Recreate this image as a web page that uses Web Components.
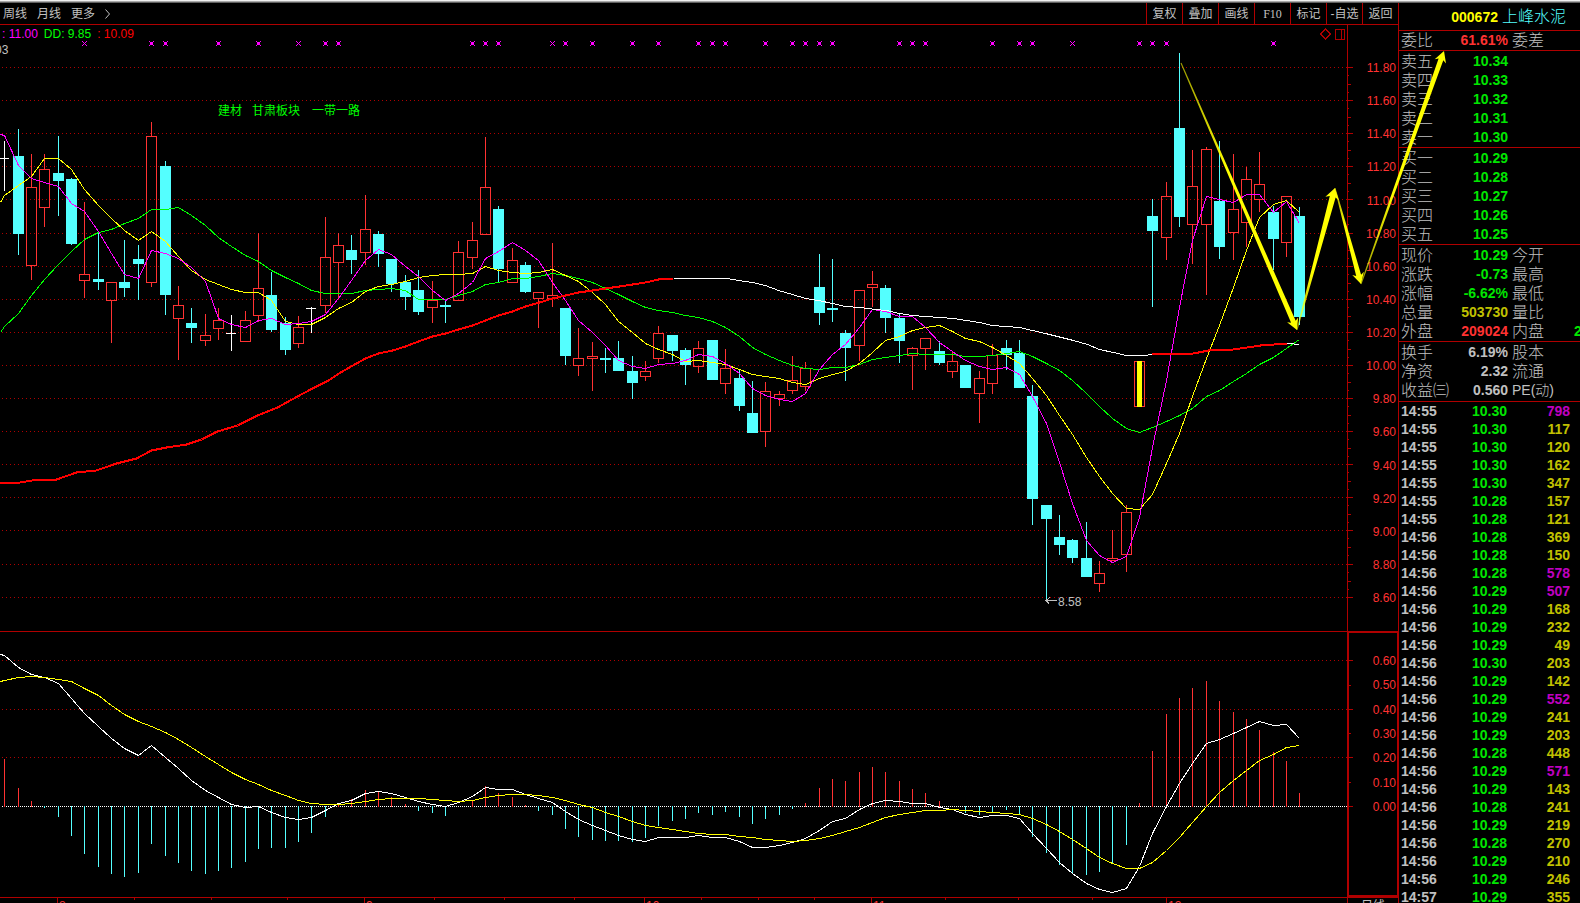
<!DOCTYPE html>
<html lang="zh-CN">
<head>
<meta charset="utf-8">
<title>000672 上峰水泥</title>
<style>
html, body { margin: 0; height: 100%; background: #000; }
body { overflow: hidden; color: #c0c0c0; font: 12px/16px "Liberation Sans", "Noto Sans CJK SC", sans-serif;
  --line: #b00000; --red: #ff3232; --green: #00e600; --cyan: #54ffff; --yellow: #ffff00; --grey: #c0c0c0; }
</style>
</head>
<body>
<stock-app></stock-app>
<script>
const NS = 'font: 12px/16px "Liberation Sans", "Noto Sans CJK SC", sans-serif;';
class Base extends HTMLElement {
  constructor() {
    super();
    this.attachShadow({ mode: 'open' });
  }
  connectedCallback() { this.shadowRoot.innerHTML = this.render(); }
}

/* ---------- data: [kind, high, low, top, bottom], one entry per trading day ---------- */
const DAYS = `W141,191,158,158 C129,255,156,234 R154,280,187,266 R154,227,169,208 C136,216,173,181 C178,245,179,244
R202,298,274,281 C232,290,279,282 R282,343,282,301 C240,297,282,288 C245,300,259,264 R122,287,136,283 C161,315,166,295
R286,360,305,319 C308,343,323,328 R314,346,335,341 R308,340,320,329 W315,351,333,333 R311,342,320,342 R233,322,288,316
C272,332,295,330 C317,355,323,350 R316,348,327,344 W307,333,308,308 R217,313,257,306 R233,298,245,263 C235,274,250,260
R195,265,229,253 C231,267,234,254 C259,292,259,284 C275,310,282,297 C270,315,290,312 R281,323,300,308 C300,323,305,307
R241,301,252,301 R222,269,240,258 R137,235,187,235 C206,282,209,269 R248,283,260,283 C262,293,265,292 R292,328,292,299
R243,307,295,299 C308,365,308,356 R328,376,358,366 R342,391,356,359 C348,373,358,360 C341,371,358,371 C356,399,371,383
R361,381,371,377 R326,363,333,359 C335,361,335,351 C348,385,350,365 R341,373,348,367 C340,380,340,380 R349,394,368,384
C369,411,378,406 C381,433,413,433 R382,447,391,432 R391,406,394,399 R356,394,380,391 R362,391,368,387 C254,325,287,313
C259,322,308,310 C330,381,333,348 R290,361,290,346 R271,307,284,288 C285,333,288,318 C314,363,318,341 R347,390,348,356
R338,370,338,349 C341,365,351,363 R352,378,361,372 C365,388,365,388 R371,423,378,394 R344,394,355,384 C340,370,348,355
C340,388,353,388 C385,525,396,499 C505,599,505,519 C515,555,537,545 C539,563,540,558 C522,577,558,577 R561,592,573,584
R530,561,558,561 R505,572,512,555 Y361,407,361,407 C199,307,216,231 R182,260,196,238 C53,227,128,217 R150,264,186,225
R147,295,149,225 C141,259,201,247 R154,260,209,233 R167,247,179,223 R152,212,184,200 C206,270,212,239 R196,257,196,243
C207,325,216,317`.split(/\s+/).map(s => [s[0], ...s.slice(1).split(',').map(Number)]);

const MA5 = [134,135,165,178,182,186,203,211,231,253,274,278,250,253,258,267,281,318,324,327,320,318,324,323,321,314,298,280,260,249,254,266,276,290,300,293,282,258,251,242,250,260,282,300,320,332,345,360,366,368,364,363,360,354,356,363,373,388,395,399,401,393,369,354,344,327,309,311,316,316,327,342,351,360,366,369,367,374,396,423,462,503,540,555,562,556,517,447,380,307,240,196,199,202,194,194,212,201,223];
const MA10 = [202,195,185,176,158,158,169,189,205,218,230,240,231,241,256,270,279,284,289,292,292,300,321,324,324,317,308,302,291,286,284,281,277,275,274,274,273,266,270,272,273,272,269,275,281,292,304,321,332,343,349,354,361,360,362,364,369,374,376,378,382,384,378,374,371,363,352,340,336,330,327,325,331,338,341,347,355,363,378,395,415,434,457,476,493,508,509,494,463,433,396,358,325,287,250,217,204,200,212];
const MA20 = [332,326,313,295,279,264,251,239,232,229,223,218,209,209,207,215,225,237,246,255,261,270,277,283,290,293,293,293,290,289,288,290,299,299,299,295,291,284,282,278,278,276,273,275,278,282,288,294,301,307,310,312,315,317,321,327,336,347,354,360,365,368,369,367,367,364,359,357,355,353,354,354,354,356,356,355,353,351,356,363,370,380,393,406,418,428,432,427,421,415,408,396,390,381,373,364,357,348,339];
const RISE_1 = [[0,483],[20,482],[37,479],[56,479],[76,472],[96,470],[116,463],[136,458],[151,450],[166,447],[186,444],[201,439],[217,431],[237,425],[257,415],[277,407],[297,396],[312,388],[328,380],[340,372],[365,358],[378,353],[392,350],[405,346],[418,341],[432,336],[445,333],[458,329],[472,325],[485,320],[498,315],[512,311],[525,306],[539,302],[552,298],[565,295],[578,292],[592,290],[605,288],[619,286],[632,284],[645,282],[658,279],[673,278]];
const FALL = [[673,278],[727,278],[738,280],[752,282],[765,285],[778,290],[792,294],[805,298],[818,300],[832,303],[845,306],[859,307],[875,309],[886,310],[899,313],[912,315],[939,317],[953,318],[979,322],[992,325],[1019,327],[1045,333],[1073,340],[1087,344],[1099,349],[1113,352],[1126,355],[1143,355],[1152,354]];
const RISE_2 = [[1152,354],[1193,353],[1208,350],[1233,349],[1260,345],[1287,343]];
const HIST = [759,788,801,808,817,836,854,867,874,877,873,844,856,863,871,874,871,868,862,849,848,848,842,833,817,804,799,790,791,797,804,811,813,816,806,800,786,793,797,805,811,815,829,837,840,841,841,842,838,826,821,819,813,815,812,817,824,819,815,809,803,788,779,781,772,767,772,781,789,793,801,806,813,815,812,810,814,837,853,865,873,875,872,864,845,803,751,714,698,688,681,701,712,719,730,752,761,793];
const DIF = [654,655,667,674,677,683,698,713,726,738,748,755,745,757,768,780,790,797,804,807,806,812,817,819,817,810,803,800,793,791,793,797,801,804,806,802,796,787,789,789,794,798,802,811,819,825,830,835,839,841,837,837,837,835,837,837,841,847,847,845,842,838,830,821,818,809,803,800,801,803,803,807,809,814,817,815,815,818,833,848,862,873,883,889,892,888,866,833,806,783,763,743,739,733,727,721,725,724,738];
const DEA = [681,680,677,676,677,679,681,688,695,705,714,721,726,732,739,747,756,764,772,779,784,790,795,800,803,804,804,803,801,799,798,798,798,799,800,801,800,797,795,794,794,795,797,800,804,807,812,816,821,825,827,829,831,833,834,834,836,837,839,840,841,840,838,835,831,827,822,817,814,812,810,810,809,810,811,812,813,814,818,824,831,839,848,857,863,868,868,862,850,837,822,806,792,780,770,760,754,747,745];
const SIGNALS = [6,11,12,16,19,22,24,25,35,36,37,41,42,44,47,49,52,53,54,57,59,60,61,62,67,68,69,74,76,77,80,85,86,87,95];
const FAINT = [6, 22, 41, 80];

const dayX = i => Math.round(4.3 + i * 13.35);
/* the first value of a daily series is its level at the left edge */
const daily = a => a.map((y, k) => [k ? dayX(k - 1) : 0, y]);
const curve = (pts, color, w = 1) =>
  `<polyline fill="none" stroke="${color}" stroke-width="${w}" points="${pts.map(([x, y]) => (x + .5) + ',' + (y + .5)).join(' ')}"/>`;
const rect = (x, y, w, h, f) => `<rect x="${x}" y="${y}" width="${w}" height="${h}" fill="${f}"/>`;
const dots = (y, step, color) => `<line x1="2" x2="100%" y1="${y}.5" y2="${y}.5" stroke="${color}" stroke-dasharray="1 ${step - 1}"/>`;
const GRID = Array.from({ length: 17 }, (_, k) => Math.round(67 + k * 33.1));

/* plot canvas: newest day stays on the right edge, older days run out on the left */
const canvas = (top, width, back, front) => `
  <svg width="100%" height="100%" shape-rendering="crispEdges">
    <g transform="translate(0,${-top})">${back}</g>
    <svg x="100%" overflow="visible"><g transform="translate(${-width},${-top})">${front}</g></svg>
  </svg>`;

class PriceChart extends Base {
  candle([k, hi, lo, a, b], i) {
    const x = dayX(i);
    if (k === 'W') return rect(x, hi, 1, lo - hi, '#fff') + rect(x - 5, a, 10, 1, '#fff');
    if (k === 'C') return rect(x, hi, 1, lo - hi, '#54ffff') + rect(x - 5, a, 11, b - a, '#54ffff');
    return rect(x, hi, 1, a - hi, '#ff3232') + rect(x, b, 1, lo - b, '#ff3232')
      + `<rect x="${x - 4.5}" y="${a + .5}" width="10" height="${b - a - 1}" fill="none" stroke="#ff3232"/>`
      + (k === 'Y' ? rect(x - 2, a, 5, b - a, '#ff0') : '');
  }
  signal(i) {
    const x = dayX(i);
    return `<path d="M${x - 2} 41l5 5M${x + 3} 41l-5 5" stroke="#f0f" fill="none"/>`
      + (FAINT.includes(i) ? '' : rect(x - 1, 42, 3, 3, '#f0f'));
  }
  render() {
    return `<style>
      :host { display: block; position: relative; overflow: hidden; min-width: 0; }
      svg { display: block; }
      text { ${NS} }
      .plot { position: absolute; inset: 0; }
      .legend { position: relative; display: flex; gap: 6px; padding: 1px 0 0 2px; }
      .count { position: relative; margin-left: -5px; }
      .a { color: #f0f; } .b { color: #0f0; } .c { color: #f00; }
    </style>
    <div class="plot">${canvas(25, 1347,
      GRID.map(y => dots(y, 4, '#b00000')).join(''),
      SIGNALS.map(i => this.signal(i)).join('') + DAYS.map((d, i) => this.candle(d, i)).join('')
      + curve(daily(MA20), '#0f0') + curve(daily(MA10), '#ff0') + curve(daily(MA5), '#f0f')
      + curve(FALL, '#fff') + curve([[1287,343],[1299,344]], '#fff')
      + curve(RISE_1, '#f00', 2) + curve(RISE_2, '#f00', 2)
      + `<path d="M1325.5 29l5 5-5 5-5-5zM1335.5 29.5h9v10h-9zM1341.5 29v10" fill="none" stroke="#b00000"/>
         <path d="M1057 600.5h-11m4-3l-4 3 3 3" fill="none" stroke="#c0c0c0"/>
         <text x="1058" y="606" fill="#c0c0c0">8.58</text>
         <g fill="#0f0"><text x="218" y="115">建材</text><text x="252" y="115">甘肃板块</text><text x="312" y="115">一带一路</text></g>`)}</div>
    <div class="legend"><span class="a">: 11.00</span><span class="b">DD: 9.85</span><span class="c">: 10.09</span></div>
    <div class="count">03</div>`;
  }
}

class MacdChart extends Base {
  render() {
    const bars = HIST.map((y, i) => y < 806 ? rect(dayX(i), y, 1, 807 - y, '#ff3232') : rect(dayX(i), 806, 1, y - 806, '#54ffff')).join('');
    return `<style>:host { display: block; overflow: hidden; min-width: 0; } svg { display: block; }</style>
    ${canvas(632, 1347, [660, 709, 757].map(y => dots(y, 4, '#b00000')).join('') + dots(806, 2, '#fff'),
      bars + curve(daily(DIF), '#fff') + curve(daily(DEA), '#ff0'))}`;
  }
}

class MonthAxis extends Base {
  render() {
    const small = [134, 211, 287, 434, 504, 574, 701, 758, 814, 945, 1018, 1092];
    const big = [[57, '8'], [364, '9'], [644, '10'], [871, '11'], [1166, '12']];
    return `<style>:host { display: block; overflow: hidden; min-width: 0; } svg { display: block; } text { ${NS} fill: #ff3232; }</style>
    ${canvas(898, 1347, '', small.map(x => rect(x, 898, 1, 2, '#b00000')).join('')
      + big.map(([x, t]) => rect(x, 898, 1, 5, '#b00000') + `<text x="${x + 2}" y="910">${t}</text>`).join(''))}`;
  }
}

/* scale with evenly spread labels; its tick marks are given as "y:length" pairs */
class ValueAxis extends Base {
  render() {
    const labels = this.getAttribute('labels').split(' ');
    const ticks = this.getAttribute('ticks').split(' ').map(t => t.split(':').map(Number));
    return `<style>
      :host { display: grid; box-sizing: border-box; overflow: hidden; }
      svg, ol { grid-area: 1 / 1; }
      ol { list-style: none; margin: 0; padding: 0 var(--end) 0 0; height: var(--span); margin-top: var(--top);
        display: flex; flex-direction: column; justify-content: space-between; text-align: right; color: var(--red); }
    </style>
    <svg width="100%" height="100%" shape-rendering="crispEdges">${ticks.map(([y, l]) => rect(0, y, l, 1, '#b00000')).join('')}</svg>
    <ol>${labels.map(l => `<li>${l}</li>`).join('')}</ol>`;
  }
}

class TopBar extends Base {
  render() {
    return `<style>
      :host { display: flex; justify-content: space-between; border-bottom: 1px solid var(--line); }
      nav { display: flex; align-items: center; }
      .periods { gap: 10px; padding-left: 3px; }
      button { font: inherit; color: inherit; background: none; border: 0; padding: 0; margin: 0; white-space: nowrap; }
      .tools { align-items: stretch; }
      .tools button { width: 36px; border-left: 1px solid var(--line); text-align: center; }
      .tools .latin { font-family: "Liberation Serif", serif; }
      svg { display: block; }
    </style>
    <nav class="periods"><button>周线</button><button>月线</button><button>更多</button>
      <button aria-label="展开"><svg width="5" height="10" fill="none" stroke="#c0c0c0"><path d="M.5.5l4 4.500-4 4.500"/></svg></button></nav>
    <nav class="tools"><button>复权</button><button>叠加</button><button>画线</button><button class="latin">F10</button><button>标记</button><button>-自选</button><button>返回</button></nav>`;
  }
}

class QuoteTable extends Base {
  render() {
    const rows = this.getAttribute('rows').split(';').map(r => r.split(','));
    return `<style>
      :host { display: block; border-bottom: 1px solid var(--line); padding: var(--pad, 1px 0 0); }
      table { border-collapse: collapse; table-layout: fixed; width: 100%; }
      td, th { padding: 0; height: 19px; line-height: 19px; white-space: nowrap; overflow: hidden; text-align: left; }
      th { font-size: 16px; font-weight: 300; padding-left: 2px; }
      th.mix { font-size: 14px; }
      td { font-size: 14px; font-weight: bold; text-align: right; padding-right: 2px; }
      td:last-child { text-align: left; padding: 0; color: var(--green); }
      .g { color: var(--green); } .r { color: var(--red); } .y { color: #c0c000; }
    </style>
    <table><colgroup><col style="width:50px"><col style="width:61px"><col style="width:64px"><col></colgroup>
    ${rows.map(([n, v, c, n2 = '', v2 = '']) => `<tr><th scope="row">${n}</th><td class="${c}">${v}</td><th scope="row" class="${/PE/.test(n2) ? 'mix' : ''}">${n2}</th><td>${v2}</td></tr>`).join('')}
    </table>`;
  }
}

const TICKS = `14:55 10.30 798,14:55 10.30 117,14:55 10.30 120,14:55 10.30 162,14:55 10.30 347,14:55 10.28 157,14:55 10.28 121,14:56 10.28 369,14:56 10.28 150,14:56 10.28 578,14:56 10.29 507,14:56 10.29 168,14:56 10.29 232,14:56 10.29 49,14:56 10.30 203,14:56 10.29 142,14:56 10.29 552,14:56 10.29 241,14:56 10.29 203,14:56 10.28 448,14:56 10.29 571,14:56 10.29 143,14:56 10.28 241,14:56 10.29 219,14:56 10.28 270,14:56 10.29 210,14:56 10.29 246,14:57 10.29 355`;
class TickTable extends Base {
  render() {
    return `<style>
      :host { display: block; }
      table { border-collapse: collapse; table-layout: fixed; width: 100%; font-size: 14px; font-weight: bold; }
      td { padding: 0; height: 18px; line-height: 18px; text-align: right; color: #c0c000; }
      td:first-child { text-align: left; padding-left: 2px; color: var(--grey); }
      td:nth-child(2) { color: var(--green); }
      td:last-child { padding-right: 10px; }
      td.big { color: #c000c0; }
    </style>
    <table><colgroup><col style="width:50px"><col style="width:58px"><col></colgroup>
    ${TICKS.split(',').map(t => t.split(' ')).map(([a, b, c]) => `<tr><td>${a}</td><td>${b}</td><td class="${c > 500 ? 'big' : ''}">${c}</td></tr>`).join('')}
    </table>`;
  }
}

class QuotePanel extends Base {
  render() {
    return `<style>
      :host { display: block; overflow: hidden; border-left: 1px solid var(--line); }
      header { display: flex; align-items: center; justify-content: flex-end; gap: 4px; height: 28px; box-sizing: border-box;
        padding-right: 14px; border-bottom: 1px solid var(--line); }
      h1 { margin: 0; font-size: 16px; font-weight: 300; color: var(--cyan); }
      b { font-size: 14px; color: var(--yellow); }
      .one { --pad: 0; } .three { --pad: 1px 0; }
    </style>
    <header><b>000672</b><h1>上峰水泥</h1></header>
    <quote-table class="one" rows="委比,61.61%,r,委差"></quote-table>
    <quote-table rows="卖五,10.34,g;卖四,10.33,g;卖三,10.32,g;卖二,10.31,g;卖一,10.30,g"></quote-table>
    <quote-table rows="买一,10.29,g;买二,10.28,g;买三,10.27,g;买四,10.26,g;买五,10.25,g"></quote-table>
    <quote-table rows="现价,10.29,g,今开;涨跌,-0.73,g,最高;涨幅,-6.62%,g,最低;总量,503730,y,量比;外盘,209024,r,内盘,2"></quote-table>
    <quote-table class="three" rows="换手,6.19%,,股本;净资,2.32,,流通;收益㈢,0.560,,PE(动)"></quote-table>
    <tick-table></tick-table>`;
  }
}

/* hand-drawn forecast: tapering arrows laid over the chart and the quotes */
class TrendArrows extends Base {
  arrow([x1, y1, x2, y2, w, hw], i) {
    const L = Math.hypot(x2 - x1, y2 - y1), ux = (x2 - x1) / L, uy = (y2 - y1) / L;
    const p = (d, s) => (x1 + ux * d - uy * s).toFixed(1) + ',' + (y1 + uy * d + ux * s).toFixed(1);
    return `<linearGradient id="g${i}" gradientUnits="userSpaceOnUse" x1="${x1}" y1="${y1}" x2="${x2}" y2="${y2}">
        <stop offset="0" stop-color="#ff0" stop-opacity=".6"/><stop offset=".4" stop-color="#ff0"/></linearGradient>
      <polygon fill="url(#g${i})" points="${[p(0, -.5), p(L - 9, -w), p(L - 11, -hw), p(L, 0), p(L - 11, hw), p(L - 9, w), p(0, .5)].join(' ')}"/>`;
  }
  render() {
    return `<style>:host { display: block; position: absolute; top: 0; right: 0; pointer-events: none; } svg { display: block; }</style>
    <svg width="420" height="340" viewBox="1160 0 420 340">${[
      [1181, 63, 1297, 330, 2.5, 6], [1297, 330, 1335, 188, 3, 7],
      [1335, 188, 1361, 284, 2.5, 6], [1361, 284, 1444, 51, 2.5, 6]].map(this.arrow).join('')}</svg>`;
  }
}

class StockApp extends Base {
  render() {
    const price = GRID.map(y => y - 25), sub = [];
    price.forEach((y, k) => { sub.push(y + ':5'); if (k < 16) sub.push((y + 8) + ':1', (y + 17) + ':3', (y + 25) + ':1'); });
    const prices = Array.from({ length: 17 }, (_, k) => (11.8 - k * .2).toFixed(2)).join(' ');
    return `<style>
      :host { display: grid; position: relative; height: 100vh; overflow: hidden; background: #000;
        grid-template: 3px 22px minmax(0, 1fr) 266px 6px / minmax(0, 1fr) 51px 182px; }
      .edge { grid-column: 1 / -1; background: linear-gradient(#f0f0f0 1px, #a8a8a8 1px 2px, #606060 2px); }
      top-bar { grid-column: 1 / 3; }
      quote-panel { grid-area: 2 / 3 / -1 / 4; }
      price-chart { grid-area: 3 / 1; }
      macd-chart { grid-area: 4 / 1; border-top: 1px solid var(--line); }
      month-axis { grid-area: 5 / 1; border-top: 1px solid var(--line); }
      .price { grid-area: 3 / 2; border-left: 1px solid var(--line); --top: 35px; --span: 546px; --end: 2px; }
      .macd { grid-area: 4 / 2; border: 2px solid var(--line); border-right-width: 1px; --top: 20px; --span: 162px; --end: 1px; }
      .period { grid-area: 5 / 2; overflow: hidden; border-top: 1px solid var(--line); border-left: 1px solid var(--line); padding-left: 13px; white-space: nowrap; }
    </style>
    <div class="edge"></div>
    <top-bar></top-bar>
    <price-chart></price-chart>
    <value-axis class="price" labels="${prices}" ticks="${sub.join(' ')}"></value-axis>
    <macd-chart></macd-chart>
    <value-axis class="macd" labels="0.60 0.50 0.40 0.30 0.20 0.10 0.00" ticks="27:4 52:2 76:4 100:2 124:4 149:2 173:4"></value-axis>
    <month-axis></month-axis>
    <div class="period">日线</div>
    <quote-panel></quote-panel>
    <trend-arrows></trend-arrows>`;
  }
}

for (const [n, c] of Object.entries({
  'price-chart': PriceChart, 'macd-chart': MacdChart, 'month-axis': MonthAxis, 'value-axis': ValueAxis,
  'top-bar': TopBar, 'quote-table': QuoteTable, 'tick-table': TickTable, 'quote-panel': QuotePanel,
  'trend-arrows': TrendArrows, 'stock-app': StockApp })) customElements.define(n, c);
</script>
</body>
</html>
